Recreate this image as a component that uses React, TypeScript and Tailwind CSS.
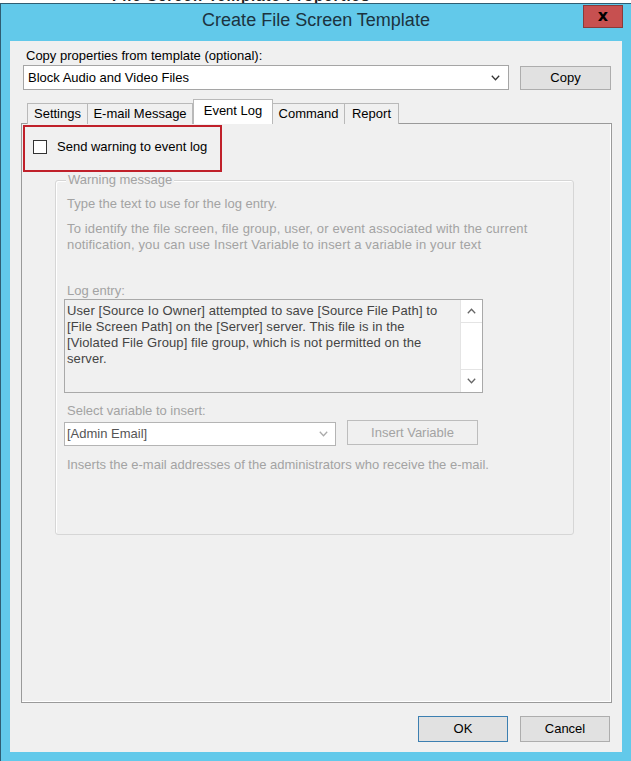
import React from "react";

const font = { fontFamily: '"Liberation Sans", Arial, sans-serif' };

function Chevron({ color = "#444", up = false }: { color?: string; up?: boolean }) {
  return (
    <svg width="9" height="6" viewBox="0 0 9 6" className="block">
      <path
        d={up ? "M0.8 5.2 L4.5 1.3 L8.2 5.2" : "M0.8 0.8 L4.5 4.7 L8.2 0.8"}
        fill="none"
        stroke={color}
        strokeWidth="1.3"
      />
    </svg>
  );
}

export default function App() {
  return (
    <div className="w-[631px] h-[761px] bg-white relative overflow-hidden text-[13px] leading-[16px]" style={font}>
      {/* clipped background text */}
      <div className="h-[3px] overflow-hidden pl-[112px]">
        <div className="-mt-[12px] font-bold text-[15px] leading-[15px] text-[#222] tracking-[1px]">
          File Screen Template Properties
        </div>
      </div>
      {/* window */}
      <div className="h-[758px] border-t border-l border-[#2f5d72] bg-[#62c9ea] flex flex-col">
        <div className="h-[37px] flex justify-center pt-[5px]">
          <span className="text-[18px] leading-[23px] text-[#1c3340]">Create File Screen Template</span>
        </div>
        <div className="ml-[9px] mr-[9px] h-[711px] bg-[#f0f0f0] flex flex-col">
          <div className="pt-[7px] pl-[16px] text-black">Copy properties from template (optional):</div>
          <div className="flex items-start mt-[1px]">
            <div className="ml-[13px] w-[486px] h-[25px] bg-white border border-[#a5a5a5] flex items-center pl-[4px] pr-[8px] text-black">
              <span className="flex-1">Block Audio and Video Files</span>
              <Chevron color="#333" />
            </div>
            <div className="ml-[11px] mt-[1px] w-[91px] h-[24px] bg-[#e1e1e1] border border-[#adadad] flex items-center justify-center text-black">
              Copy
            </div>
          </div>
          {/* tabs */}
          <div className="flex items-end ml-[17px] mt-[9px] h-[25px] relative z-10">
            <div className="w-[61px] h-[21px] border border-b-0 border-[#b9b9b9] bg-[#f0f0f0] flex items-center justify-center text-black">Settings</div>
            <div className="w-[105px] h-[21px] border border-l-0 border-b-0 border-[#b9b9b9] bg-[#f0f0f0] flex items-center justify-center text-black">E-mail Message</div>
            <div className="w-[80px] h-[25px] border border-b-0 border-[#b9b9b9] bg-white flex justify-center pt-[3px] text-black">Event Log</div>
            <div className="w-[72px] h-[21px] border border-l-0 border-b-0 border-[#b9b9b9] bg-[#f0f0f0] flex items-center justify-center text-black">Command</div>
            <div className="w-[54px] h-[21px] border border-l-0 border-b-0 border-[#b9b9b9] bg-[#f0f0f0] flex items-center justify-center text-black">Report</div>
          </div>
          {/* panel */}
          <div className="-mt-[1px] ml-[11px] w-[591px] h-[580px] border border-[#9a9a9a] bg-[#f0f0f0] shadow-[inset_-1px_-1px_0_#ffffff] relative pt-[15px] pl-[11px]">
            <div className="absolute left-[1px] top-[1px] w-[199px] h-[47px] border-2 border-[#c0202a]" />
            <div className="flex items-center h-[15px]">
              <div className="w-[14px] h-[14px] bg-white border border-[#333]" />
              <span className="ml-[10px] text-black">Send warning to event log</span>
            </div>
            <div className="mt-[26px] ml-[22px] w-[519px] h-[355px] border border-[#d6d6d6] rounded-[3px] shadow-[inset_1px_1px_0_#ffffff] relative pt-[15px] pl-[8px] text-[#a3a3a3]">
              <span className="absolute left-[10px] -top-[9px] px-[2px] bg-[#f0f0f0]">Warning message</span>
              <div className="ml-[3px]">Type the text to use for the log entry.</div>
              <div className="ml-[3px] mt-[9px] tracking-[0.15px]">
                To identify the file screen, file group, user, or event associated with the current
                <br />
                notification, you can use Insert Variable to insert a variable in your text
              </div>
              <div className="ml-[3px] mt-[30px]">Log entry:</div>
              <div className="w-[419px] h-[94px] border border-[#a9a9a9] bg-[#f0f0f0] flex">
                <div className="flex-1 pl-[2px] pt-[3px] text-[#444] tracking-[0.1px]">
                  <div>User [Source Io Owner] attempted to save [Source File Path] to</div>
                  <div>[File Screen Path] on the [Server] server. This file is in the</div>
                  <div>[Violated File Group] file group, which is not permitted on the</div>
                  <div>server.</div>
                </div>
                <div className="w-[22px] bg-white border-l border-[#e4e4e4] flex flex-col">
                  <div className="h-[23px] border-b border-[#e4e4e4] flex items-center justify-center">
                    <Chevron color="#666" up />
                  </div>
                  <div className="flex-1" />
                  <div className="h-[23px] border-t border-[#e4e4e4] flex items-center justify-center">
                    <Chevron color="#666" />
                  </div>
                </div>
              </div>
              <div className="ml-[3px] mt-[10px]">Select variable to insert:</div>
              <div className="flex items-start mt-[1px] h-[26px]">
                <div className="mt-[2px] w-[272px] h-[24px] bg-white border border-[#b4b4b4] flex items-center pl-[2px] pr-[7px]">
                  <span className="flex-1 text-[#555]">[Admin Email]</span>
                  <Chevron color="#aaa" />
                </div>
                <div className="ml-[11px] w-[131px] h-[25px] border border-[#bdbdbd] bg-[#f0f0f0] flex items-center justify-center text-[#a3a3a3]">
                  Insert Variable
                </div>
              </div>
              <div className="ml-[3px] mt-[11px]">Inserts the e-mail addresses of the administrators who receive the e-mail.</div>
            </div>
          </div>
          {/* buttons */}
          <div className="flex justify-end gap-[12px] mt-[13px] pr-[12px]">
            <div className="w-[90px] h-[26px] bg-[#e1e1e1] border border-[#3c7fb1] flex items-center justify-center text-black">OK</div>
            <div className="w-[90px] h-[26px] bg-[#e1e1e1] border border-[#adadad] flex items-center justify-center text-black">Cancel</div>
          </div>
        </div>
      </div>
      {/* close button */}
      <div className="absolute left-[583px] top-[5px] w-[40px] h-[23px] bg-[#c75050] border border-[#8a3a3a] flex items-center justify-center">
        <span className="font-bold text-[16px] leading-[16px] text-black -mt-[2px]" style={{ fontFamily: '"DejaVu Sans", sans-serif' }}>x</span>
      </div>
    </div>
  );
}
